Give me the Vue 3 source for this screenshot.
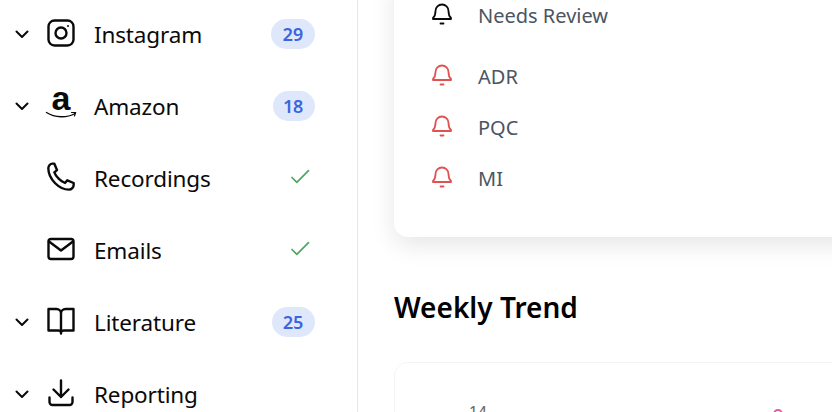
<template>
  <div class="page">
    <aside class="sidebar">
      <div v-for="item in items" :key="item.name" class="nav-row">
        <span class="chevron">
          <svg v-if="item.expandable" width="16" height="16" viewBox="0 0 16 16" fill="none" stroke="currentColor" stroke-width="2" stroke-linecap="round" stroke-linejoin="round">
            <path d="M2.5 5.5 8 11l5.500-5.500" />
          </svg>
        </span>
        <span class="nav-icon">
          <svg v-if="item.icon === 'instagram'" width="32" height="32" viewBox="0 0 32 32" fill="none" stroke="currentColor" stroke-width="2.4">
            <rect x="3.500" y="3.500" width="25" height="25" rx="6" />
            <circle cx="16" cy="16" r="5.500" />
            <circle cx="23" cy="9" r="1" fill="currentColor" stroke="none" />
          </svg>
          <svg v-else-if="item.icon === 'amazon'" class="amazon" width="32" height="32" viewBox="0 0 32 32" fill="none">
            <text x="16" y="21" text-anchor="middle" class="amazon-a">a</text>
            <path d="M1.500 23.500C10 29 22 29 30 24.500" stroke="currentColor" stroke-width="1.400" stroke-linecap="round" />
            <path d="M26.500 23.500 30.500 23.500 29.500 27" stroke="currentColor" stroke-width="1.200" stroke-linecap="round" />
          </svg>
          <svg v-else-if="item.icon === 'phone'" width="32" height="32" viewBox="0 0 24 24" fill="none" stroke="currentColor" stroke-width="1.800" stroke-linecap="round" stroke-linejoin="round">
            <path d="M2.500 5.500C2.500 3.500 4 2 5.500 2H7l2 4.800-2 1.700c1.200 3.200 4.800 6.800 8 8l1.700-2 4.800 2v1.500c0 1.700-1.500 3.500-3.500 3.500C10.500 21.500 2.500 13.500 2.500 5.500Z" />
          </svg>
          <svg v-else-if="item.icon === 'mail'" width="32" height="32" viewBox="0 0 32 32" fill="none" stroke="currentColor" stroke-width="2.400" stroke-linecap="round" stroke-linejoin="round">
            <rect x="3.500" y="6" width="25" height="20" rx="2.500" />
            <path d="M4 8.500 16 17.500 28 8.500" />
          </svg>
          <svg v-else-if="item.icon === 'book'" width="32" height="32" viewBox="0 0 32 32" fill="none" stroke="currentColor" stroke-width="2.400" stroke-linecap="round" stroke-linejoin="round">
            <path d="M16 27v1.500M16 8.500C16 6 14 4 11.500 4H3.500v21.500H13c1.700 0 3 .8 3 2 0-1.200 1.300-2 3-2h9.500V4h-8C18 4 16 6 16 8.500Zm0 0V27" />
          </svg>
          <svg v-else width="32" height="32" viewBox="0 0 32 32" fill="none" stroke="currentColor" stroke-width="2.400" stroke-linecap="round" stroke-linejoin="round">
            <path d="M16 3.500V20M8.500 12.500 16 20l7.500-7.500M4.500 20.500V25a3 3 0 0 0 3 3h17a3 3 0 0 0 3-3v-4.500" />
          </svg>
        </span>
        <span class="nav-label">{{ item.name }}</span>
        <span v-if="item.count" class="badge">{{ item.count }}</span>
        <svg v-else-if="item.done" class="check" width="22" height="22" viewBox="0 0 22 22" fill="none" stroke="currentColor" stroke-width="1.700" stroke-linecap="round" stroke-linejoin="round">
          <path d="M3 11.500 7.800 16.300 19.500 4.600" />
        </svg>
      </div>
    </aside>

    <main class="content">
      <section class="card alerts">
        <div v-for="alert in alerts" :key="alert.name" class="alert-row" :class="{ first: alert.plain }">
          <svg class="bell" :class="{ red: !alert.plain }" width="24" height="24" viewBox="0 0 24 24" fill="none" stroke="currentColor" stroke-width="1.800" stroke-linecap="round" stroke-linejoin="round">
            <path d="M5.500 10a6.500 6.500 0 0 1 13 0c0 3.500.8 5.500 2.500 7v1H3v-1c1.700-1.500 2.500-3.500 2.500-7Z" />
            <path d="M10.500 22.500h3" />
          </svg>
          <span>{{ alert.name }}</span>
        </div>
      </section>

      <h2 class="section-title">Weekly Trend</h2>

      <section class="card chart">
        <span class="tick">14</span>
        <span class="dot"></span>
      </section>
    </main>
  </div>
</template>

<script setup>
const items = [
  { name: "Instagram", icon: "instagram", expandable: true, count: 29 },
  { name: "Amazon", icon: "amazon", expandable: true, count: 18 },
  { name: "Recordings", icon: "phone", done: true },
  { name: "Emails", icon: "mail", done: true },
  { name: "Literature", icon: "book", expandable: true, count: 25 },
  { name: "Reporting", icon: "download", expandable: true },
];

const alerts = [
  { name: "Needs Review", plain: true },
  { name: "ADR" },
  { name: "PQC" },
  { name: "MI" },
];
</script>

<style>
html,
body {
  margin: 0;
  overflow: hidden;
  background: #fff;
}
</style>

<style scoped>
.page {
  display: flex;
  width: 832px;
  height: 412px;
  overflow: hidden;
  background: #fff;
  color: #0a0a0a;
  font-family: "Noto Sans", "Open Sans", sans-serif;
}

.sidebar {
  flex: 0 0 358px;
  box-sizing: border-box;
  margin-top: -2px;
  padding: 0 42px 0 14px;
  border-right: 1px solid #e5e7eb;
  height: 440px;
}

.nav-row {
  display: flex;
  align-items: center;
  height: 72px;
}

.chevron {
  display: flex;
  width: 16px;
  height: 16px;
  margin-right: 15px;
}

.nav-icon {
  display: flex;
  width: 32px;
  height: 32px;
  margin-right: 17px;
  margin-bottom: 2px;
}

.amazon {
  overflow: visible;
}

.amazon-a {
  font-family: "Liberation Sans", sans-serif;
  font-size: 34px;
  font-weight: 700;
  fill: currentColor;
}

.nav-label {
  flex: 1;
  font-size: 22.5px;
  letter-spacing: -0.15px;
}

.badge {
  padding: 0 11.5px;
  height: 30px;
  line-height: 30px;
  border-radius: 15px;
  background: #dfe8fb;
  color: #3b64e0;
  font-size: 18px;
  font-weight: 600;
  font-variant-numeric: proportional-nums;
}

.check {
  margin: 0 4px 3px 0;
  color: #4fa561;
}

.content {
  flex: 1;
  min-width: 0;
  padding-left: 36px;
}

.card {
  margin-right: -60px;
  background: #fff;
  border-radius: 14px;
}

.alerts {
  height: 261px;
  margin-top: -24px;
  box-sizing: border-box;
  padding: 14px 0 0 36px;
  box-shadow: 0 8px 24px rgba(0, 0, 0, 0.1);
}

.alert-row {
  display: flex;
  align-items: center;
  gap: 24px;
  height: 51px;
  color: #4b5563;
  font-size: 20px;
}

.alert-row.first {
  margin-bottom: 10px;
}

.bell {
  margin-bottom: 6px;
  color: #0a0a0a;
}

.bell.red {
  color: #e05252;
}

.section-title {
  margin: 46px 0 0;
  font-size: 28px;
  line-height: 48px;
  font-weight: 600;
  color: #000;
}

.chart {
  position: relative;
  height: 120px;
  margin-top: 31px;
  border: 1px solid #f3f4f6;
}

.tick {
  position: absolute;
  left: 74px;
  top: 40px;
  color: #666;
  font-family: "Liberation Sans", sans-serif;
  font-size: 16px;
  line-height: 20px;
}

.dot {
  position: absolute;
  left: 378px;
  top: 46px;
  width: 6px;
  height: 6px;
  border: 2px solid #e45ca0;
  border-radius: 50%;
}
</style>
